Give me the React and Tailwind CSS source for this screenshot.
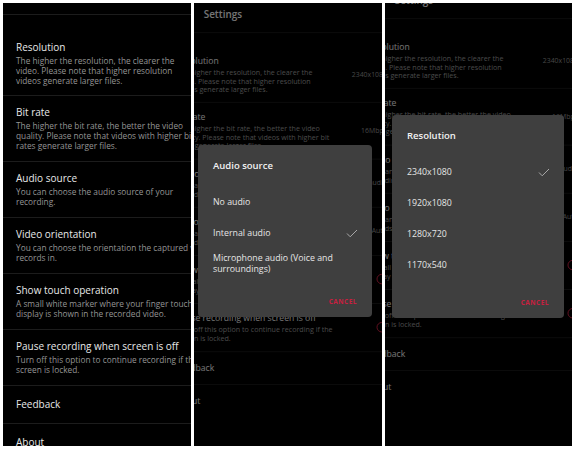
import React from 'react';

const ITEMS = [
    {
        title: 'Resolution',
        desc: ['The higher the resolution, the clearer the', 'video. Please note that higher resolution', 'videos generate larger files.'],
        value: '2340x1080',
    },
    {
        title: 'Bit rate',
        desc: ['The higher the bit rate, the better the video', 'quality. Please note that videos with higher bit', 'rates generate larger files.'],
        value: '16Mbps',
    },
    {
        title: 'Audio source',
        desc: ['You can choose the audio source of your', 'recording.'],
        value: 'Internal audio',
    },
    {
        title: 'Video orientation',
        desc: ['You can choose the orientation the captured video', 'records in.'],
        value: 'Auto',
    },
    {
        title: 'Show touch operation',
        desc: ['A small white marker where your finger touches the', 'display is shown in the recorded video.'],
        toggle: true,
    },
    {
        title: 'Pause recording when screen is off',
        desc: ['Turn off this option to continue recording if the', 'screen is locked.'],
        toggle: true,
    },
    { title: 'Feedback' },
    { title: 'About' },
];

function SettingsScreen() {
    return (
        <div className="w-[272px] bg-black">
            <div className="h-[34px] pl-[45px] pt-[6px] text-[11.5px] leading-[14px] font-semibold text-[#e8e8e8]">Settings</div>
            {ITEMS.map((item, i) => (
                <div key={item.title}
                    className={`flex items-center border-t border-[#1c1c1c] pl-[13px] pr-[14px] ${i === 0 ? 'pt-[25px] pb-[9px]' : item.desc ? 'pt-[9px] pb-[10px]' : 'pt-[11px] pb-[12px]'}`}>
                    <div className="min-w-0 flex-1 whitespace-nowrap">
                        <div className="text-[10px] leading-[14px] text-[#e8e8e8]">{item.title}</div>
                        {item.desc && (
                            <div className="mt-[2px] text-[8.3px] leading-[10px] text-[#959595]">
                                {item.desc.map(line => <div key={line}>{line}</div>)}
                            </div>
                        )}
                    </div>
                    {item.value && <span className="shrink-0 whitespace-nowrap text-[8px] leading-[10px] text-[#8e8e8e]">{item.value}</span>}
                    {item.toggle && <span className="h-[12px] w-[12px] shrink-0 rounded-full border-[1.5px] border-[#e0264a]" />}
                </div>
            ))}
        </div>
    );
}

function Check() {
    return (
        <svg width="12" height="9" viewBox="0 0 12 9" className="shrink-0">
            <polyline points="1,4.5 4.2,7.8 11,1" fill="none" stroke="#a8a8a8" strokeWidth="1" />
        </svg>
    );
}

function ChoiceDialog({ title, options, selected, className }) {
    return (
        <div className={`absolute rounded-[4px] bg-[#3f3f3f] ${className}`}>
            <div className="px-[15px] pt-[14px] pb-[13.5px] text-[9.5px] leading-[14px] font-semibold text-[#f2f2f2]">{title}</div>
            {options.map(opt => (
                <div key={opt.join(' ')} className="flex min-h-[31px] items-center justify-between py-[4px] pl-[15px] pr-[14px]">
                    <span className="text-[8.8px] leading-[11px] text-[#e6e6e6]">
                        {opt.map((l, k) => <div key={k}>{l}</div>)}
                    </span>
                    {opt[0] === selected && <Check />}
                </div>
            ))}
            <div className="flex justify-end px-[15px] pt-[17.5px] pb-[10px]">
                <span className="text-[6.5px] leading-[10px] font-bold tracking-[0.5px] text-[#c8203f]">CANCEL</span>
            </div>
        </div>
    );
}

export default function App() {
    return (
        <div className="flex h-[450px] w-[576px] gap-[3px] bg-white pt-[3px] pl-[3px] pr-[4px] pb-[4px] font-['Open_Sans',sans-serif]">
            {/* plain list */}
            <div className="relative w-[188px] overflow-hidden bg-black">
                <div className="-mt-[23px]"><SettingsScreen /></div>
            </div>

            {/* audio source dialog */}
            <div className="relative w-[188px] overflow-hidden bg-black">
                <div className="-ml-[29px] w-[272px] origin-top-left scale-[0.86]"><SettingsScreen /></div>
                <div className="absolute inset-0 bg-black/50" />
                <ChoiceDialog
                    className="left-[4px] top-[142px] w-[174px]"
                    title="Audio source"
                    selected="Internal audio"
                    options={[['No audio'], ['Internal audio'], ['Microphone audio (Voice and', 'surroundings)']]}
                />
            </div>

            {/* resolution dialog */}
            <div className="relative w-[187px] overflow-hidden bg-black">
                <div className="-mt-[14px] -ml-[29px] w-[272px] origin-top-left scale-[0.86]"><SettingsScreen /></div>
                <div className="absolute inset-0 bg-black/50" />
                <ChoiceDialog
                    className="left-[7px] top-[112px] w-[172px]"
                    title="Resolution"
                    selected="2340x1080"
                    options={[['2340x1080'], ['1920x1080'], ['1280x720'], ['1170x540']]}
                />
            </div>
        </div>
    );
}
